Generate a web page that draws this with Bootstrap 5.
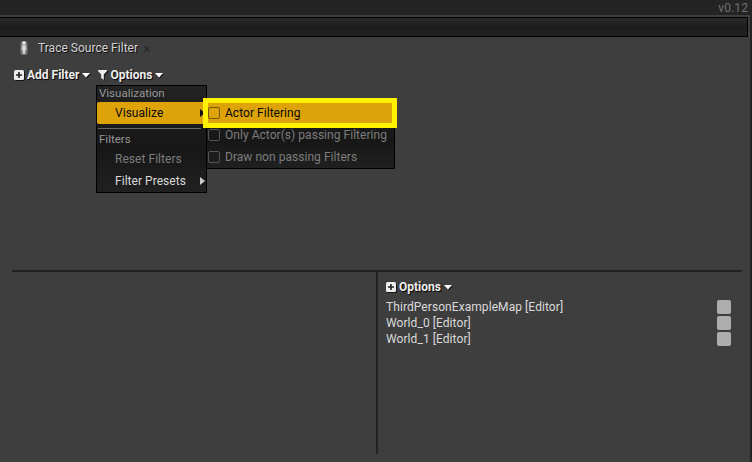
<!DOCTYPE html>
<html lang="en">
<head>
<meta charset="utf-8">
<title>Trace Source Filter</title>
<link href="https://cdn.jsdelivr.net/npm/bootstrap@5.3.0/dist/css/bootstrap.min.css" rel="stylesheet">
<style>
body{font:12px/16px Roboto,sans-serif;background:#222;color:#dadada;height:462px;overflow:hidden}
svg{display:block;flex:none}
.version{height:15px;line-height:16px;color:#707070;background:#242424;padding-right:4px;letter-spacing:.1px}
.panel{width:750px;height:447px;background:#3e3e3e;padding-top:2px}
.strip{width:748px;height:20px;border:1px solid #000;border-left:0;background:linear-gradient(#282828,#1c1c1c 55%,#202020 60%,#202020)}
.tab-title{height:22px;padding-left:19px;text-shadow:1px 1px #111;color:#d2d2d2}
.tab-title span{margin-left:9px;letter-spacing:.02px}
.tab-close{margin-left:6px}
.tools{height:22px;margin-top:5px;padding-left:14px}
.tool{color:#eee;font-weight:700;text-shadow:1px 1px 1px #000;white-space:nowrap;height:16px}
.tool span{margin:0 3px}
.tool svg{filter:drop-shadow(1px 1px 0 #151515)}
.filters{height:206px}
.worlds{height:184px;margin:0 8px 0 12px;border-top:2px solid #222}
.left-pane{width:366px;border-right:2px solid #222}
.right-pane{padding:7px 11px 0 8px}
.world-list{margin-top:4px}
.world{height:16px;letter-spacing:.07px}
.swatch{width:14px;height:14px;border-radius:2px;background:#adadad}
.menu-box{position:absolute;border:1px solid #000;background:linear-gradient(#232323,#1b1b1b 30%,#171717 60%,#202020);white-space:nowrap;letter-spacing:.04px}
.main-menu{left:96px;top:85px;width:111px;height:108px}
.sub-menu{left:206px;top:101px;width:189px;height:68px}
.heading{color:#969696;font-size:11.5px;height:16px;padding-left:2px;line-height:15px;letter-spacing:0}
.entry{height:22px;padding:0 1px 0 18px}
.active-entry{background:#dea309;color:#080808;border-radius:2px}
.off{color:#7c7c7c}
.divide{height:1px;background:#666;margin:4px 5px 3px 1px}
.sub-menu .entry{padding-left:1px}
.check{width:12px;height:12px;border:1px solid #555;border-radius:2px;margin-right:5px}
.active-entry .check{border-color:#76590e}
.marker{position:absolute;left:203px;top:98px;width:194px;height:30px;border:5px solid #fff200}
</style>
<script src="https://cdn.jsdelivr.net/npm/bootstrap@5.3.0/dist/js/bootstrap.bundle.min.js"></script>
</head>
<body>
<div class="version text-end">v0.12</div>
<main class="panel">
  <div class="strip"></div>
  <div class="tab-title d-flex align-items-center">
    <svg width="10" height="16" viewBox="0 0 10 16"><rect x="1.5" y="1" width="7" height="14" rx="3" fill="#777"/><circle cx="5" cy="3" r="1.7" fill="#eee"/><path d="M3 5h4l.6 5H6.4v4H3.6v-4H2.4z" fill="#bbb"/><path d="M4.5 5.500h1v7h-1z" fill="#fff"/></svg>
    <span>Trace Source Filter</span>
    <svg class="tab-close" width="6" height="16" viewBox="0 0 6 16"><path d="M.5 6.500l5 5M5.500 6.500l-5 5" stroke="#262626" stroke-width="1.2"/></svg>
  </div>
  <div class="filters">
    <div class="tools d-flex align-items-center">
      <div class="tool d-flex align-items-center">
        <svg width="10" height="10" viewBox="0 0 10 10"><rect width="10" height="10" rx="1.5" fill="#eee"/><path d="M5 2v6M2 5h6" stroke="#222" stroke-width="1.6"/></svg>
        <span>Add Filter</span>
        <svg width="8" height="5" viewBox="0 0 8 5"><path d="M0 0h8L4 4.5z" fill="#fff"/></svg>
      </div>
      <div class="tool d-flex align-items-center ms-2">
        <svg width="9" height="10" viewBox="0 0 9 10"><path d="M0 0h9v1L5.800 4.500V10L3.200 8V4.500L0 1z" fill="#eee"/></svg>
        <span>Options</span>
        <svg width="8" height="5" viewBox="0 0 8 5"><path d="M0 0h8L4 4.5z" fill="#fff"/></svg>
      </div>
    </div>
  </div>
  <section class="worlds d-flex">
    <div class="left-pane"></div>
    <div class="right-pane flex-grow-1">
      <div class="tool d-flex align-items-center">
        <svg width="10" height="10" viewBox="0 0 10 10"><rect width="10" height="10" rx="1.5" fill="#eee"/><path d="M5 2v6M2 5h6" stroke="#222" stroke-width="1.6"/></svg>
        <span>Options</span>
        <svg width="8" height="5" viewBox="0 0 8 5"><path d="M0 0h8L4 4.5z" fill="#fff"/></svg>
      </div>
      <div class="world-list">
        <div class="world d-flex align-items-center justify-content-between"><span>ThirdPersonExampleMap [Editor]</span><i class="swatch"></i></div>
        <div class="world d-flex align-items-center justify-content-between"><span>World_0 [Editor]</span><i class="swatch"></i></div>
        <div class="world d-flex align-items-center justify-content-between"><span>World_1 [Editor]</span><i class="swatch"></i></div>
      </div>
    </div>
  </section>
</main>
<div class="menu-box main-menu">
  <div class="heading">Visualization</div>
  <div class="entry active-entry d-flex align-items-center justify-content-between"><span>Visualize</span><svg width="5" height="8" viewBox="0 0 5 8"><path d="M0 0l5 4-5 4z" fill="#111"/></svg></div>
  <div class="divide"></div>
  <div class="heading">Filters</div>
  <div class="entry off d-flex align-items-center">Reset Filters</div>
  <div class="entry d-flex align-items-center justify-content-between"><span>Filter Presets</span><svg width="5" height="8" viewBox="0 0 5 8"><path d="M0 0l5 4-5 4z" fill="#ccc"/></svg></div>
</div>
<div class="menu-box sub-menu">
  <div class="entry active-entry d-flex align-items-center"><i class="check"></i>Actor Filtering</div>
  <div class="entry off d-flex align-items-center"><i class="check"></i>Only Actor(s) passing Filtering</div>
  <div class="entry off d-flex align-items-center"><i class="check"></i>Draw non passing Filters</div>
</div>
<div class="marker"></div>
</body>
</html>
